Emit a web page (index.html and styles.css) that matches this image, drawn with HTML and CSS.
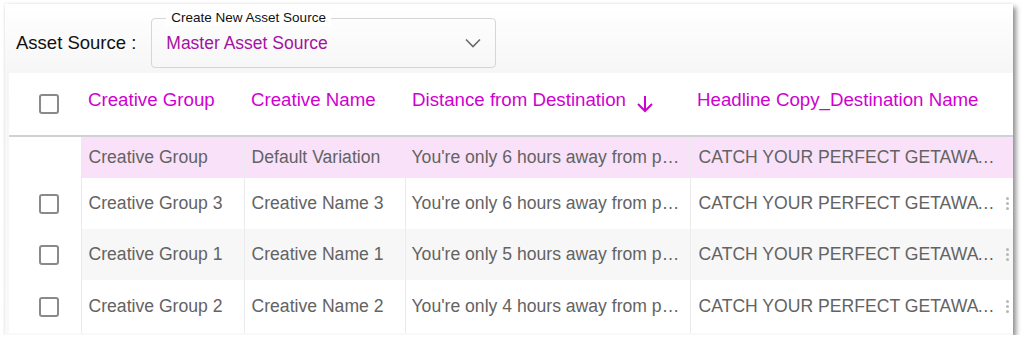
FILE: index.html
```html
<!DOCTYPE html>
<html lang="en">
<head>
    <meta charset="UTF-8">
    <meta name="viewport" content="width=device-width, initial-scale=1.0">
    <title>Asset Source</title>
    <link rel="stylesheet" href="styles.css">
</head>
<body>
    <div class="frame">
        <div class="toolbar">
            <span class="toolbar-label">Asset Source :</span>
            <div class="select-box">
                <span class="select-legend">Create New Asset Source</span>
                <span class="select-value">Master Asset Source</span>
                <svg class="chevron" width="16" height="10" viewBox="0 0 16 10">
                    <polyline points="1,1.5 8,8.5 15,1.5" fill="none" stroke="#6a6a6a" stroke-width="1.6"/>
                </svg>
            </div>
        </div>

        <table class="grid">
            <colgroup>
                <col style="width: 72px">
                <col style="width: 163px">
                <col style="width: 161px">
                <col style="width: 285px">
                <col>
            </colgroup>
            <thead>
                <tr>
                    <th class="check-cell"><span class="checkbox"></span></th>
                    <th>Creative Group</th>
                    <th>Creative Name</th>
                    <th>
                        <span class="sort-head">Distance from Destination
                            <svg width="20" height="20" viewBox="0 0 20 20">
                                <path d="M10 2v15M3 10l7 7 7-7" fill="none" stroke="#d000d0" stroke-width="2"/>
                            </svg>
                        </span>
                    </th>
                    <th>Headline Copy_Destination Name</th>
                </tr>
            </thead>
            <tbody>
                <tr class="row-default">
                    <td class="check-cell"></td>
                    <td>Creative Group</td>
                    <td>Default Variation</td>
                    <td>You're only 6 hours away from paradise</td>
                    <td><div class="last-cell"><span class="cut">CATCH YOUR PERFECT GETAWAY IN PARADISE</span></div></td>
                </tr>
                <tr class="row-tall">
                    <td class="check-cell"><span class="checkbox"></span></td>
                    <td>Creative Group 3</td>
                    <td>Creative Name 3</td>
                    <td>You're only 6 hours away from paradise</td>
                    <td><div class="last-cell"><span class="cut">CATCH YOUR PERFECT GETAWAY IN PARADISE</span><span class="kebab"><i></i><i></i><i></i></span></div></td>
                </tr>
                <tr class="row-tall row-alt">
                    <td class="check-cell"><span class="checkbox"></span></td>
                    <td>Creative Group 1</td>
                    <td>Creative Name 1</td>
                    <td>You're only 5 hours away from paradise</td>
                    <td><div class="last-cell"><span class="cut">CATCH YOUR PERFECT GETAWAY IN PARADISE</span><span class="kebab"><i></i><i></i><i></i></span></div></td>
                </tr>
                <tr class="row-tall row-last">
                    <td class="check-cell"><span class="checkbox"></span></td>
                    <td>Creative Group 2</td>
                    <td>Creative Name 2</td>
                    <td>You're only 4 hours away from paradise</td>
                    <td><div class="last-cell"><span class="cut">CATCH YOUR PERFECT GETAWAY IN PARADISE</span><span class="kebab"><i></i><i></i><i></i></span></div></td>
                </tr>
            </tbody>
        </table>
    </div>
</body>
</html>
```

FILE: styles.css
```css
body {
    margin: 0;
    background-color: white;
    font-family: "Liberation Sans", Arial, sans-serif;
}
.frame {
    width: 1008px;
    height: 331px;
    margin: 4px 0 0 5px;
    background: linear-gradient(#ffffff, #f6f6f6 70px, #f9f9f9);
    box-shadow: 3px 3px 5px rgba(0, 0, 0, 0.45), -1px -1px 2px rgba(0, 0, 0, 0.04);
    overflow: hidden;
}
.toolbar {
    height: 69px;
    box-sizing: border-box;
    padding: 14px 0 0 11px;
    display: flex;
    align-items: flex-start;
}
.toolbar-label {
    font-size: 18.5px;
    color: #111;
    line-height: 50px;
    margin-right: 15px;
}
.select-box {
    position: relative;
    width: 345px;
    height: 50px;
    box-sizing: border-box;
    border: 1px solid #d6d6d6;
    border-radius: 4px;
    display: flex;
    align-items: center;
    padding: 0 14px 0 14px;
}
.select-legend {
    position: absolute;
    top: -9px;
    left: 14px;
    padding: 0 5px;
    font-size: 13.5px;
    color: #111;
    background-color: white;
    line-height: 16px;
}
.select-value {
    flex: 1;
    font-size: 17.5px;
    color: #a312a3;
}
.grid {
    width: 1004px;
    margin-left: 4px;
    border-collapse: collapse;
    table-layout: fixed;
    background-color: white;
}
.grid th {
    height: 54px;
    padding: 0 0 8px 7px;
    text-align: left;
    font-weight: normal;
    font-size: 18.7px;
    color: #d000d0;
    white-space: nowrap;
    border-bottom: 2px solid #d2d2d2;
}
.grid td {
    padding: 0 7px;
    font-size: 17.6px;
    color: #636363;
    white-space: nowrap;
    overflow: hidden;
    text-overflow: ellipsis;
    border-left: 1px solid #ebebeb;
}
.grid td.check-cell {
    border-left: none;
    background-color: white;
}
.grid .check-cell {
    padding: 0 0 0 30px;
}
.grid th.check-cell {
    padding-bottom: 8px;
}
.grid td:nth-child(4) {
    padding-left: 6px;
}
.grid td:nth-child(5) {
    padding: 0 4px 0 8px;
}
.row-default td {
    height: 41px;
    background-color: #f9e2f9;
}
.row-tall td {
    height: 51px;
}
.row-alt td {
    background-color: #f7f7f7;
}
.row-last td {
    height: 53px;
}
.checkbox {
    display: block;
    width: 20px;
    height: 20px;
    box-sizing: border-box;
    border: 2px solid #8a8a8a;
    border-radius: 3px;
}
.grid th .checkbox {
    margin-top: 8px;
}
.sort-head {
    display: inline-flex;
    align-items: center;
    gap: 9px;
}
.sort-head svg {
    margin-top: 7px;
}
.last-cell {
    display: flex;
    align-items: center;
}
.cut {
    width: 305px;
    overflow: hidden;
    text-overflow: ellipsis;
}
.kebab {
    display: flex;
    flex-direction: column;
    gap: 2px;
    margin-left: 3px;
}
.kebab i {
    display: block;
    width: 3px;
    height: 3px;
    border-radius: 50%;
    background-color: #b8b8b8;
}
```
